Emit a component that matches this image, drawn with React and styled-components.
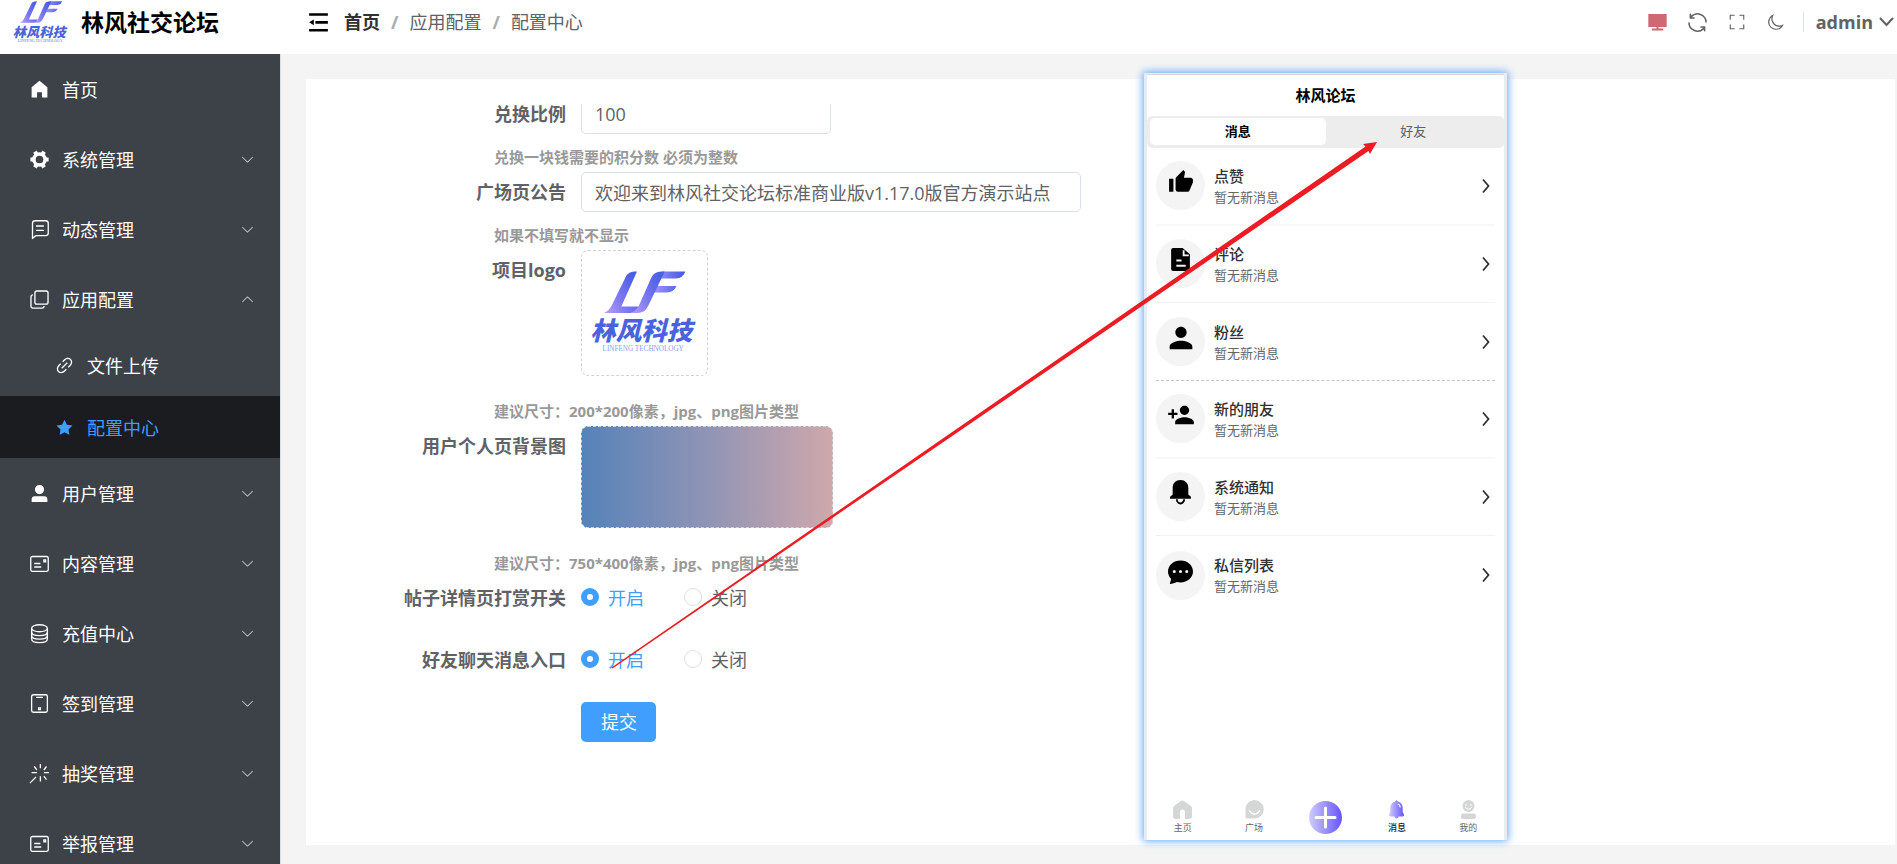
import React, { useState } from 'react';
import styled, { createGlobalStyle } from 'styled-components';
import { MdThumbUp, MdPerson, MdPersonAdd } from 'react-icons/md';
import { BsChatDotsFill } from 'react-icons/bs';

const GlobalStyle = createGlobalStyle`
  * {
    box-sizing: border-box;
  }

  body {
    margin: 0;
    background: #f4f4f4;
    color: #606266;
    font-family: 'Open Sans', 'Noto Sans CJK SC', sans-serif;
    font-size: 18px;
  }

  button,
  input {
    font-family: inherit;
  }
`;

const Page = styled.div`
  display: grid;
  grid-template-columns: 281px 1fr;
  grid-template-rows: 54px 1fr;
  height: 100vh;
  overflow: hidden;
`;

const Header = styled.header`
  grid-column: 1 / -1;
  display: flex;
  align-items: center;
  padding-bottom: 10px;
  background: #fff;
`;

const Brand = styled.a`
  display: flex;
  align-items: center;
  gap: 12px;
  width: 306px;
  padding-left: 12px;
  color: #000;
  font-size: 23px;
  font-weight: 700;
  line-height: 36px;
  text-decoration: none;

  svg {
    width: 57px;
    height: 44px;
  }
`;

const IconButton = styled.button`
  display: flex;
  justify-content: center;
  min-width: 24px;
  padding: 0;
  border: none;
  background: none;
  color: ${({ $color }) => $color || '#606266'};
  cursor: pointer;
`;

const Breadcrumb = styled.nav`
  display: flex;
  align-items: center;
  gap: 11px;
  margin-left: 13px;
  line-height: 24px;
`;

const Crumb = styled.a`
  color: ${({ $home }) => ($home ? '#303133' : '#606266')};
  font-weight: ${({ $home }) => ($home ? 700 : 400)};
  text-decoration: none;
`;

const Separator = styled.span`
  color: #a8abb2;
  font-weight: 700;
`;

const Tools = styled.div`
  display: flex;
  align-items: center;
  gap: 15px;
  margin-left: auto;
  padding-right: 2px;
`;

const UserButton = styled(IconButton)`
  align-items: center;
  gap: 5px;
  padding-left: 12px;
  border-left: 1px solid #dcdfe6;
  font-size: 18px;
  font-weight: 700;
  line-height: 20px;
`;

const Sidebar = styled.nav`
  overflow: hidden;
  border-right: 1px solid #dcdfe6;
  background: #3d4148;
`;

const MenuItem = styled.a`
  display: flex;
  align-items: center;
  gap: 12px;
  height: ${({ $sub }) => ($sub ? 62 : 70)}px;
  padding: 0 25px 0 ${({ $sub }) => ($sub ? 54 : 29)}px;
  background: ${({ $active }) => ($active ? '#1b1c1f' : 'transparent')};
  color: ${({ $active }) => ($active ? '#409eff' : '#fff')};
  text-decoration: none;
`;

const MenuArrow = styled.span`
  display: flex;
  margin-left: auto;
  color: #c8cacd;
  transform: ${({ $open }) => ($open ? 'rotate(180deg)' : 'none')};
`;

const Main = styled.main`
  display: flex;
  padding: 25px 2px 19px 25px;
`;

const Card = styled.section`
  position: relative;
  display: flex;
  flex: 1;
  min-width: 0;
  padding: 25px;
  background: #fff;
`;

const ScrollArea = styled.div`
  flex: 1;
  overflow: hidden;
`;

const Form = styled.form`
  margin-top: -10px;
`;

const FormItem = styled.div`
  display: grid;
  grid-template-columns: 250px 1fr;
  align-items: start;
  margin-bottom: ${({ $tight }) => ($tight ? 10 : 22)}px;
`;

const Label = styled.label`
  padding-right: 15px;
  font-weight: 700;
  line-height: 40px;
  text-align: right;
`;

const Hint = styled.div`
  padding: 0 0 2px 163px;
  color: #999;
  font-size: 15px;
  font-weight: 700;
  line-height: 26px;
`;

const TextInput = styled.input`
  width: ${({ $wide }) => ($wide ? 500 : 250)}px;
  height: 40px;
  padding: 0 13px;
  border: 1px solid #dcdfe6;
  border-radius: 5px;
  color: #606266;
  font-size: 18px;
  outline: none;
`;

const Upload = styled.button`
  display: flex;
  width: ${({ $wide }) => ($wide ? 252 : 127)}px;
  height: ${({ $wide }) => ($wide ? 102 : 126)}px;
  padding: 0;
  border: 1px dashed #d0d3d9;
  border-radius: 7px;
  background: ${({ $wide }) => ($wide ? 'linear-gradient(90deg, #5582b9, #9094b5 50%, #cfa8ab) border-box' : '#fff')};
  cursor: pointer;

  svg {
    width: 100%;
    height: 100%;
  }
`;

const RadioGroup = styled.div`
  display: flex;
  gap: 40px;
  height: 38px;
`;

const RadioLabel = styled.label`
  display: flex;
  align-items: center;
  gap: 9px;
  color: ${({ $checked }) => ($checked ? '#409eff' : '#606266')};
`;

const Radio = styled.input`
  appearance: none;
  width: 18px;
  height: 18px;
  margin: 0;
  border: 1px solid #dcdfe6;
  border-radius: 50%;
  background: #fff;

  &:checked {
    border: 6px solid #409eff;
  }
`;

const SubmitButton = styled.button`
  grid-column: 2;
  justify-self: start;
  height: 40px;
  padding: 0 19px 2px 20px;
  border: none;
  border-radius: 5px;
  background: #409eff;
  color: #fff;
  font-size: 18px;
  cursor: pointer;
`;

const Phone = styled.aside`
  position: absolute;
  top: -6px;
  bottom: 5px;
  left: 838px;
  display: flex;
  flex-direction: column;
  width: 363px;
  border: solid #e5ecf5;
  border-width: 1px 3px 0;
  background: #fff;
  box-shadow: 0 0 8px 1px #5ba6f8;
`;

const PhoneTitle = styled.h1`
  margin: 0;
  border-top: 1px solid #d4d6d9;
  color: #000;
  font-size: 15px;
  font-weight: 700;
  line-height: 41px;
  text-align: center;
`;

const PhoneTabs = styled.div`
  display: grid;
  grid-template-columns: 1fr 1fr;
  height: 32px;
  padding: 2px 3px 3px;
  border-radius: 5px;
  background: #ededed;
`;

const PhoneTab = styled.button`
  padding: 0 0 2px;
  border: none;
  border-radius: 5px;
  background: ${({ $active }) => ($active ? '#fff' : 'transparent')};
  color: ${({ $active }) => ($active ? '#000' : '#606266')};
  font-size: 13px;
  font-weight: ${({ $active }) => ($active ? 700 : 400)};
`;

const MessageList = styled.div`
  display: grid;
  grid-template-rows: repeat(6, 1fr);
  height: 466px;
  padding: 0 9px;
`;

const Message = styled.a`
  display: flex;
  align-items: center;
  gap: 9px;
  border-bottom: ${({ $line }) => $line};
  color: #303133;
  text-decoration: none;
`;

const Avatar = styled.span`
  display: flex;
  align-items: center;
  justify-content: center;
  width: 49px;
  height: 49px;
  padding-bottom: 8px;
  border-radius: 50%;
  background: #f4f4f4;
  color: #000;
`;

const MessageText = styled.span`
  display: flex;
  flex: 1;
  flex-direction: column;
`;

const MessageTitle = styled.strong`
  font-size: 15px;
  font-weight: 500;
  line-height: 22px;
`;

const MessageNote = styled.span`
  color: #666;
  font-size: 13px;
  line-height: 20px;
`;

const TabBar = styled.nav`
  display: grid;
  grid-template-columns: repeat(5, 1fr);
  align-items: center;
  height: 45px;
  margin-top: auto;
`;

const TabBarItem = styled.a`
  display: flex;
  flex-direction: column;
  align-items: center;
  gap: 2px;
  color: ${({ $active }) => ($active ? '#222' : '#666')};
  font-size: 9px;
  font-weight: ${({ $active }) => ($active ? 500 : 400)};
  line-height: 14px;
  text-decoration: none;
`;

const Arrow = styled.svg`
  position: absolute;
  top: 0;
  left: 0;
  overflow: visible;
  pointer-events: none;
`;

const solid = {
  home: 'M512 80 128 400V896h264V640H632v256H896V400z',
  user: 'M288 320a224 224 0 1 0 448 0 224 224 0 1 0-448 0m544 608H160a32 32 0 0 1-32-32v-96a160 160 0 0 1 160-160h448a160 160 0 0 1 160 160v96a32 32 0 0 1-32 32z',
  star: 'M283.84 867.84 512 747.776l228.16 119.936a6.4 6.4 0 0 0 9.28-6.72l-43.52-254.08 184.512-179.904a6.4 6.4 0 0 0-3.52-10.88l-255.104-37.12L517.76 147.904a6.4 6.4 0 0 0-11.52 0L392.192 379.072l-255.104 37.12a6.4 6.4 0 0 0-3.52 10.88L318.08 606.976l-43.584 254.08a6.4 6.4 0 0 0 9.28 6.72z',
  copy: 'M768 832a128 128 0 0 1-128 128H192A128 128 0 0 1 64 832V384a128 128 0 0 1 128-128v64a64 64 0 0 0-64 64v448a64 64 0 0 0 64 64h448a64 64 0 0 0 64-64z M384 128a64 64 0 0 0-64 64v448a64 64 0 0 0 64 64h448a64 64 0 0 0 64-64V192a64 64 0 0 0-64-64zm0-64h448a128 128 0 0 1 128 128v448a128 128 0 0 1-128 128H384a128 128 0 0 1-128-128V192A128 128 0 0 1 384 64',
  link: 'M715.648 625.152 670.4 579.904l90.496-90.56c75.008-74.944 85.12-186.368 22.656-248.896-62.528-62.464-173.952-52.352-248.96 22.656L444.16 353.6l-45.248-45.248 90.496-90.496c100.032-99.968 251.968-110.08 339.456-22.656 87.488 87.488 77.312 239.424-22.656 339.456l-90.496 90.496zm-90.496 90.496-90.496 90.496C434.624 906.112 282.688 916.224 195.2 828.8c-87.488-87.488-77.312-239.424 22.656-339.456l90.496-90.496 45.248 45.248-90.496 90.56c-75.008 74.944-85.12 186.368-22.656 248.896 62.528 62.464 173.952 52.352 248.96-22.656l90.496-90.496zm0-362.048 45.248 45.248L398.848 670.4 353.6 625.152z',
  down: 'M831.872 340.864 512 652.672 192.128 340.864a30.592 30.592 0 0 0-42.752 0 29.12 29.12 0 0 0 0 41.6L489.664 714.24a32 32 0 0 0 44.672 0l340.288-331.712a29.12 29.12 0 0 0 0-41.728 30.592 30.592 0 0 0-42.752 0z',
  fold: 'M896 128H128v110h768zm0 323H384v110h512zm0 323H128v110h768zM320 384 128 506l192 122z',
  monitor: 'M64 96h896v640H64zM464 736h96v70h230v90H234v-90h230z',
  refresh: 'M771.776 794.88A384 384 0 0 1 128 512h64a320 320 0 0 0 555.712 216.448H654.72a32 32 0 1 1 0-64h149.056a32 32 0 0 1 32 32v148.928a32 32 0 1 1-64 0v-50.56zM276.288 295.616h92.992a32 32 0 0 1 0 64H220.16a32 32 0 0 1-32-32V178.56a32 32 0 0 1 64 0v50.56A384 384 0 0 1 896.128 512h-64a320 320 0 0 0-555.776-216.384z',
  fullscreen: 'm160 96.064 192 .192a32 32 0 0 1 0 64l-192-.192V352a32 32 0 0 1-64 0V96h64zm0 831.872V928H96V672a32 32 0 1 1 64 0v191.936l192-.192a32 32 0 1 1 0 64zM864 96.064V96h64v256a32 32 0 1 1-64 0V160.064l-192 .192a32 32 0 1 1 0-64zm0 831.872-192-.192a32 32 0 0 1 0-64l192 .192V672a32 32 0 1 1 64 0v256h-64z',
  moon: 'M240.448 240.448a384 384 0 1 0 559.424 525.696 448 448 0 0 1-542.016-542.08 390.592 390.592 0 0 0-17.408 16.384zm181.056 362.048a384 384 0 0 0 525.632 16.384A448 448 0 1 1 405.056 76.8a384 384 0 0 0 16.448 525.696',
};

const outline = {
  comment: 'M4 22V5a3 3 0 0 1 3-3h12a3 3 0 0 1 3 3v11a3 3 0 0 1-3 3H8zM8 8h9M8 13h9',
  postcard: 'M4 4h16a2 2 0 0 1 2 2v13a2 2 0 0 1-2 2H4a2 2 0 0 1-2-2V6a2 2 0 0 1 2-2zM6 12h7M6 16h8M17 8h2v2h-2z',
  coin: 'M3 6a9 4 0 1 0 18 0a9 4 0 1 0-18 0v4c0 6 18 6 18 0V6M3 10v4c0 6 18 6 18 0v-4M3 14v4c0 6 18 6 18 0v-4',
  phone: 'M5 2h14a2 2 0 0 1 2 2v16a2 2 0 0 1-2 2H5a2 2 0 0 1-2-2V4a2 2 0 0 1 2-2zM8 5h8M11 17h2v2h-2z',
  magic: 'M1 23l7-7M13 1v5M13 15v6M3 11h6M17 11h6M6 4l3 4M20 4l-3 4M17 15l3 4',
};

const Icon = ({ name, size = 21 }) =>
  solid[name] ? (
    <svg width={size} height={size} viewBox="0 0 1024 1024" fill="currentColor" aria-hidden="true">
      <path d={solid[name]} />
    </svg>
  ) : (
    <svg width={size} height={size} viewBox="0 0 24 24" fill="none" stroke="currentColor" strokeWidth="1.5" aria-hidden="true">
      <path d={outline[name]} />
    </svg>
  );

const GearIcon = () => (
  <svg width="21" height="21" viewBox="0 0 24 24" fill="none" stroke="currentColor" aria-hidden="true">
    <circle cx="12" cy="12" r="6.4" strokeWidth="4" />
    <path strokeWidth="4.6" d="M1.6 12h3M19.4 12h3M6.8 3l1.5 2.6M17.2 3l-1.5 2.6M6.8 21l1.5-2.6M17.2 21l-1.5-2.6" />
  </svg>
);

const Logo = ({ id, viewBox }) => (
  <svg viewBox={viewBox} role="img" aria-label="林风科技">
    <defs>
      <linearGradient id={`${id}-stem`} x1="0" y1="1" x2="1" y2="0.3">
        <stop offset="0" stopColor="#b9a0fb" />
        <stop offset="0.5" stopColor="#7b76f2" />
        <stop offset="1" stopColor="#4660e6" />
      </linearGradient>
      <linearGradient id={`${id}-arm`}>
        <stop offset="0" stopColor="#a294fa" />
        <stop offset="1" stopColor="#4058e4" />
      </linearGradient>
    </defs>
    <path fill={`url(#${id}-stem)`} d="M167 63C146 63 137 68 130 84L91 164Q83 182 66 190H150Q166 186 171 170H119Z" />
    <path fill={`url(#${id}-arm)`} d="M244 63H315Q308 84 286 84H238ZM228 107H288Q280 127 258 127H218Z" />
    <path fill={`url(#${id}-stem)`} d="M252 63C226 63 217 68 209 86L177 158Q168 184 146 190H168C188 190 196 180 203 165Z" />
    <text x="24" y="274" fill="#4a63dd" fontFamily="'Noto Sans CJK SC', sans-serif" fontSize="78" fontWeight="900" fontStyle="italic">林风科技</text>
    <text x="186" y="305" fill="#8b9df0" fontFamily="'Liberation Serif', serif" fontSize="22" textAnchor="middle">LINFENG TECHNOLOGY</text>
  </svg>
);

const FileIcon = () => (
  <svg width="25" height="25" viewBox="0 0 24 24" aria-hidden="true">
    <path d="M5 1h9l7 6v14a2 2 0 0 1-2 2H5a2 2 0 0 1-2-2V3a2 2 0 0 1 2-2z" />
    <path d="M15 3v5h5M8 13h5M8 18h9" fill="none" stroke="#f4f4f4" strokeWidth="1.8" />
  </svg>
);

const BellIcon = () => (
  <svg width="25" height="25" viewBox="0 0 24 24" aria-hidden="true">
    <path d="M12 0c4.5 0 7.5 3 7.5 7.5V14l2.5 2v2H2v-2l2.5-2V7.5C4.5 3 7.5 0 12 0z" />
    <path d="M8.5 18.5a3.5 4 0 0 0 7 0" fill="none" stroke="#000" strokeWidth="1.8" />
  </svg>
);

const menu = [
  { label: '首页', icon: 'home', leaf: true },
  { label: '系统管理', icon: 'gear' },
  { label: '动态管理', icon: 'comment' },
  { label: '应用配置', icon: 'copy', open: true },
  { label: '文件上传', icon: 'link', leaf: true, sub: true },
  { label: '配置中心', icon: 'star', leaf: true, sub: true, active: true },
  { label: '用户管理', icon: 'user' },
  { label: '内容管理', icon: 'postcard' },
  { label: '充值中心', icon: 'coin' },
  { label: '签到管理', icon: 'phone' },
  { label: '抽奖管理', icon: 'magic' },
  { label: '举报管理', icon: 'postcard' },
];

const messages = [
  { title: '点赞', icon: <MdThumbUp size={26} />, line: '2px solid #f8f8f8' },
  { title: '评论', icon: <FileIcon />, line: '1px solid #f2f2f2' },
  { title: '粉丝', icon: <MdPerson size={34} />, line: '1px dashed #c4c4c4' },
  { title: '新的朋友', icon: <MdPersonAdd size={28} />, line: '2px solid #f8f8f8' },
  { title: '系统通知', icon: <BellIcon />, line: '1px solid #f2f2f2' },
  { title: '私信列表', icon: <BsChatDotsFill size={25} />, line: 'none' },
];

const SwitchField = ({ label, name }) => {
  const [value, setValue] = useState('开启');

  return (
    <FormItem>
      <Label as="span" id={`${name}-label`}>{label}</Label>
      <RadioGroup role="radiogroup" aria-labelledby={`${name}-label`}>
        {['开启', '关闭'].map((option) => (
          <RadioLabel key={option} $checked={value === option}>
            <Radio type="radio" name={name} checked={value === option} onChange={() => setValue(option)} />
            {option}
          </RadioLabel>
        ))}
      </RadioGroup>
    </FormItem>
  );
};

const PhonePreview = () => (
  <Phone>
    <PhoneTitle>林风论坛</PhoneTitle>
    <PhoneTabs>
      <PhoneTab type="button" $active>消息</PhoneTab>
      <PhoneTab type="button">好友</PhoneTab>
    </PhoneTabs>
    <MessageList>
      {messages.map(({ title, icon, line }) => (
        <Message href="#" key={title} $line={line}>
          <Avatar>{icon}</Avatar>
          <MessageText>
            <MessageTitle>{title}</MessageTitle>
            <MessageNote>暂无新消息</MessageNote>
          </MessageText>
          <svg width="16" height="16" viewBox="0 0 16 16" fill="none" stroke="#303133" strokeWidth="1.8" aria-hidden="true">
            <path d="M4 1.5l5.5 6.5L4 14.5" />
          </svg>
        </Message>
      ))}
    </MessageList>
    <TabBar>
      <TabBarItem href="#">
        <svg width="19" height="19" viewBox="0 0 19 19" fill="#d5d7d7" aria-hidden="true">
          <path d="M8 1Q9.5 0 11 1l7 5q1 1 1 2v8q0 3-3 3h-4v-7a2.5 2.5 0 0 0-5 0v7H3q-3 0-3-3V8q0-1 1-2z" />
        </svg>
        主页
      </TabBarItem>
      <TabBarItem href="#">
        <svg width="19" height="19" viewBox="0 0 19 19" aria-hidden="true">
          <path fill="#d5d7d7" d="M9.5 0a9 9 0 0 1 0 18.5H2q-1.5 0-1.5-1.5V9A9 9 0 0 1 9.5 0z" />
          <path d="M4.5 11q5 6.5 10 0" fill="none" stroke="#fff" strokeWidth="1.6" strokeLinecap="round" />
        </svg>
        广场
      </TabBarItem>
      <TabBarItem href="#" aria-label="发布">
        <svg width="33" height="33" viewBox="0 0 33 33" aria-hidden="true">
          <defs>
            <linearGradient id="plus-fill">
              <stop offset="0" stopColor="#cfccfe" />
              <stop offset="1" stopColor="#6754fb" />
            </linearGradient>
          </defs>
          <circle cx="16.5" cy="16.5" r="16.5" fill="url(#plus-fill)" />
          <path d="M16.5 7v19M7 16.5h19" stroke="#fff" strokeWidth="3" strokeLinecap="round" />
        </svg>
      </TabBarItem>
      <TabBarItem href="#" $active>
        <svg width="19" height="19" viewBox="0 0 19 19" aria-hidden="true">
          <path fill="url(#plus-fill)" d="M9.5 0L11 1.5c3.2.8 4.7 3.500 4.7 6.500v4l1.300 2.500q.5 2-1.500 2h-4a2 2 0 0 1-4 0h-4q-2 0-1.500-2L3.300 12V8c0-3 1.500-5.700 4.700-6.500z" />
          <path d="M11 4q2 .8 2.200 3" fill="none" stroke="#fff" strokeWidth="1.2" strokeLinecap="round" />
        </svg>
        消息
      </TabBarItem>
      <TabBarItem href="#">
        <svg width="19" height="19" viewBox="0 0 19 19" aria-hidden="true">
          <circle cx="9.5" cy="6" r="6" fill="#d5d7d7" />
          <rect x="2" y="13.5" width="15" height="5.5" rx="2" fill="#d5d7d7" />
          <path d="M6.5 7.5q3 3.5 6 0M7 4.5v1M12 4.5v1" fill="none" stroke="#fff" strokeLinecap="round" />
        </svg>
        我的
      </TabBarItem>
    </TabBar>
  </Phone>
);

const App = () => {
  const [ratio, setRatio] = useState('100');
  const [notice, setNotice] = useState('欢迎来到林风社交论坛标准商业版v1.17.0版官方演示站点');

  return (
    <>
      <GlobalStyle />
      <Page>
        <Header>
          <Brand href="#">
            <Logo id="brand" viewBox="20 55 335 260" />
            林风社交论坛
          </Brand>
          <IconButton type="button" aria-label="收起菜单" $color="#000">
            <Icon name="fold" size={25} />
          </IconButton>
          <Breadcrumb>
            <Crumb href="#" $home>首页</Crumb>
            <Separator>/</Separator>
            <Crumb href="#">应用配置</Crumb>
            <Separator>/</Separator>
            <Crumb href="#">配置中心</Crumb>
          </Breadcrumb>
          <Tools>
            <IconButton type="button" aria-label="大屏" $color="#cf6873"><Icon name="monitor" /></IconButton>
            <IconButton type="button" aria-label="刷新"><Icon name="refresh" size={25} /></IconButton>
            <IconButton type="button" aria-label="全屏"><Icon name="fullscreen" size={18} /></IconButton>
            <IconButton type="button" aria-label="深色模式"><Icon name="moon" size={18} /></IconButton>
            <UserButton type="button">
              admin
              <svg width="17" height="17" viewBox="0 0 17 17" fill="none" stroke="currentColor" strokeWidth="2" aria-hidden="true">
                <path d="M2 4l6.5 7L15 4" />
              </svg>
            </UserButton>
          </Tools>
        </Header>
        <Sidebar>
          {menu.map(({ label, icon, leaf, sub, active, open }) => (
            <MenuItem href="#" key={label} $sub={sub} $active={active}>
              {icon === 'gear' ? <GearIcon /> : <Icon name={icon} />}
              {label}
              {!leaf && (
                <MenuArrow $open={open}>
                  <Icon name="down" size={15} />
                </MenuArrow>
              )}
            </MenuItem>
          ))}
        </Sidebar>
        <Main>
          <Card>
            <ScrollArea>
              <Form onSubmit={(event) => event.preventDefault()}>
                <FormItem $tight>
                  <Label htmlFor="ratio">兑换比例</Label>
                  <TextInput id="ratio" value={ratio} onChange={(event) => setRatio(event.target.value)} />
                </FormItem>
                <Hint>兑换一块钱需要的积分数 必须为整数</Hint>
                <FormItem $tight>
                  <Label htmlFor="notice">广场页公告</Label>
                  <TextInput id="notice" $wide value={notice} onChange={(event) => setNotice(event.target.value)} />
                </FormItem>
                <Hint>如果不填写就不显示</Hint>
                <FormItem>
                  <Label htmlFor="logo">项目logo</Label>
                  <Upload id="logo" type="button">
                    <Logo id="project" viewBox="0 0 380 380" />
                  </Upload>
                </FormItem>
                <Hint>建议尺寸：200*200像素，jpg、png图片类型</Hint>
                <FormItem>
                  <Label htmlFor="background">用户个人页背景图</Label>
                  <Upload id="background" type="button" $wide />
                </FormItem>
                <Hint>建议尺寸：750*400像素，jpg、png图片类型</Hint>
                <SwitchField label="帖子详情页打赏开关" name="reward" />
                <SwitchField label="好友聊天消息入口" name="chat" />
                <FormItem>
                  <SubmitButton type="submit">提交</SubmitButton>
                </FormItem>
              </Form>
            </ScrollArea>
            <PhonePreview />
            <Arrow width="1071" height="590" viewBox="0 0 1071 590" fill="#ed1c24" aria-hidden="true">
              <path d="M305.5 588.5L1059.5 67.5L1057 65L1071 63L1064 75L1062.5 72L306.5 589.5z" />
            </Arrow>
          </Card>
        </Main>
      </Page>
    </>
  );
};

export default App;
